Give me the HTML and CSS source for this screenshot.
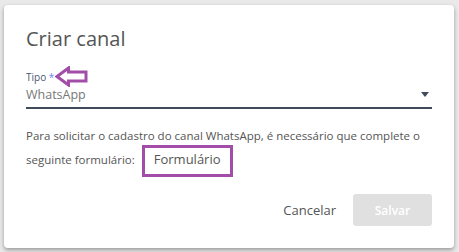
FILE: index.html
```html
<!DOCTYPE html>
<html lang="pt">
<head>
    <meta charset="UTF-8">
    <title>Criar canal</title>
    <link rel="stylesheet" href="styles.css">
</head>
<body>
    <div class="dialog">
        <h1 class="dialog-title">Criar canal</h1>

        <div class="field">
            <label class="field-label">Tipo <span class="req">*</span></label>
            <!-- seta de destaque -->
            <svg class="mark-arrow" width="33" height="21" viewBox="0 0 33 21">
                <path d="M2 10.5 L13.5 2 L13.5 6 L31 6 L31 15 L13.5 15 L13.5 19 Z" fill="none" stroke="#a24ea8" stroke-width="3" stroke-linejoin="miter"/>
            </svg>
            <div class="select">
                <span class="select-value">WhatsApp</span>
                <span class="caret"></span>
            </div>
        </div>

        <p class="info">
            Para solicitar o cadastro do canal WhatsApp, é necessário que complete o
            seguinte formulário:
            <a class="form-link" href="#">Formulário</a>
        </p>

        <div class="actions">
            <button class="btn btn-cancel">Cancelar</button>
            <button class="btn btn-save" disabled>Salvar</button>
        </div>
    </div>
</body>
</html>
```

FILE: styles.css
```css
* {
    margin: 0;
    padding: 0;
    box-sizing: border-box;
}

body {
    background: #e9e9e9;
    font-family: "Open Sans", Arial, sans-serif;
    padding: 5px 5px 4px 4px;
}

.dialog {
    width: 450px;
    height: 243px;
    background: #fff;
    border-radius: 4px;
    box-shadow: 0 2px 4px rgba(0, 0, 0, 0.35);
    padding: 20px 22px 0 22px;
    display: flex;
    flex-direction: column;
}

.dialog-title {
    font-size: 20px;
    font-weight: 400;
    line-height: 27px;
    color: #555;
}

.field {
    position: relative;
    margin-top: 18px;
}

.field-label {
    display: block;
    font-size: 10px;
    line-height: 14px;
    color: #4a5670;
}

.req {
    color: #6f84f0;
}

.mark-arrow {
    position: absolute;
    left: 29px;
    top: -4px;
}

.select {
    display: flex;
    align-items: center;
    justify-content: space-between;
    border-bottom: 2px solid #3f4b5b;
    height: 25px;
    padding-bottom: 3px;
}

.select-value {
    font-size: 12.5px;
    color: #777;
}

.caret {
    width: 0;
    height: 0;
    border-left: 4.5px solid transparent;
    border-right: 4.5px solid transparent;
    border-top: 5px solid #3f4b5b;
    margin-right: 3px;
}

.info {
    margin-top: 15px;
    font-size: 11.5px;
    line-height: 24px;
    color: #555;
}

.form-link {
    display: inline-block;
    margin: -4px 0 -4px 4px;
    padding: 0 9px;
    height: 32px;
    line-height: 23px;
    border: 3px solid #a24ea8;
    font-size: 13px;
    color: #555;
    text-decoration: none;
    vertical-align: baseline;
}

.actions {
    display: flex;
    justify-content: flex-end;
    align-items: center;
    gap: 14px;
    margin-top: 21px;
}

.btn {
    font-family: "Open Sans", Arial, sans-serif;
    border: none;
    background: none;
    font-size: 13px;
}

.btn-cancel {
    color: #555;
    padding: 0 3px;
}

.btn-save {
    width: 79px;
    height: 32px;
    border-radius: 3px;
    background: #e0e0e0;
    color: #fff;
    font-size: 12px;
    font-weight: 600;
}
```
